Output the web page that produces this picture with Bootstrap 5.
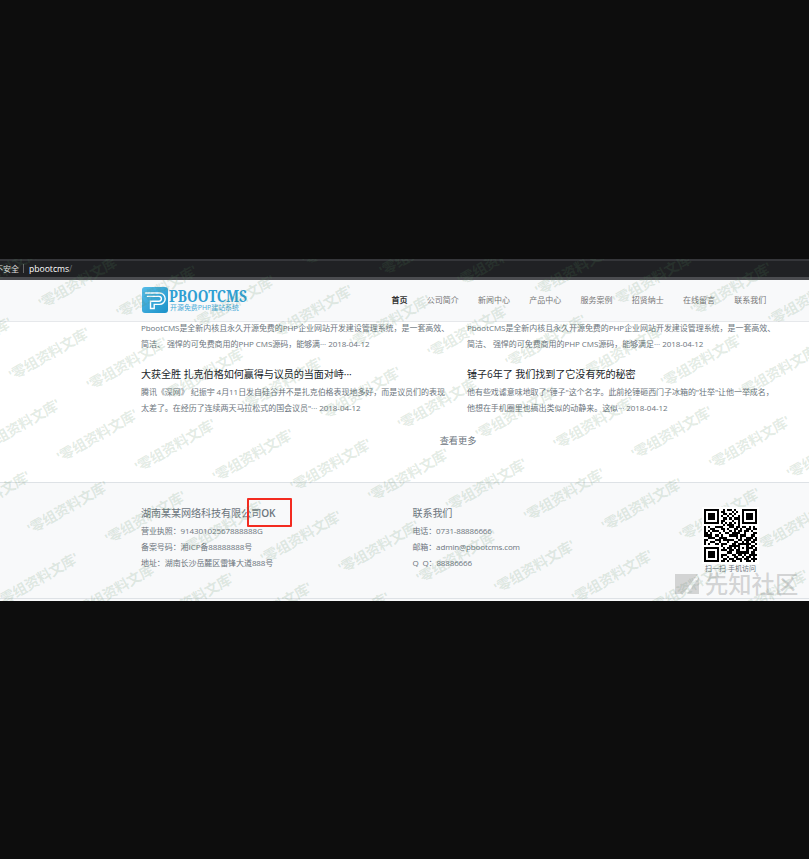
<!DOCTYPE html>
<html>
<head>
<meta charset="utf-8">
<meta name="viewport" content="width=device-width, initial-scale=1">
<title>PbootCMS</title>
<link rel="stylesheet" href="https://cdn.jsdelivr.net/npm/bootstrap@5.3.0/dist/css/bootstrap.min.css">
<style>
body{background:#0d0d0d;font-family:"Open Sans","Noto Sans CJK SC",sans-serif;font-size:8px;line-height:16px;color:#6c757d;overflow:hidden;height:859px}
.shot{margin-top:259px;height:342px;background:#fff;overflow:hidden}
.addr{height:21px;background:#202124;border-top:2px solid #35363a;border-bottom:3px solid #4b4c50;color:#fff;line-height:14px;font-size:8.6px;padding-bottom:1px}
.addr .unsafe{margin-left:-5px;width:24px;color:#e0e0e0;font-size:8px}
.addr .sep{width:1px;height:9px;background:#666;margin-right:5px}
.site-head{height:42px;background:#f8f9fa;border-bottom:1px solid #e6e8eb}
.brand{margin-left:142px;width:249.5px;padding-bottom:1px}
.brand-name{font:700 14.3px/14px "Noto Serif","DejaVu Serif Condensed","Liberation Serif",serif;color:#2f9fd3}
.menu{gap:19.25px;color:#777;padding-bottom:1px}
.menu b{font-weight:700;color:#333}
.news{padding-left:141px;height:161px}
.news-col{width:326px;flex:none;white-space:nowrap;margin-top:-2px;letter-spacing:-.05px}
.news h2{font-size:10.1px;line-height:17px;margin:14px 0 1px;color:#212529;font-weight:400;letter-spacing:-.08px}
.more{font-size:9.2px;line-height:16px;width:634px;margin-top:17px}
.site-foot{height:117px;background:#f8f9fa;border-top:1px solid #dee2e6;border-bottom:1px solid #dee2e6;padding:22px 0 0 141px;margin-top:-1px}
.foot-title{font-size:10.1px;line-height:17px;margin-bottom:1px}
.foot-a{width:271.5px;white-space:nowrap;letter-spacing:-.08px}.foot-b{width:289px;white-space:nowrap;letter-spacing:-.14px}
.qr-box{width:58px;font-size:7px;line-height:9px;color:#6c757d;padding-top:2px}
.qr-box svg{z-index:2}
.tail{height:2px;background:#f8f9fa}
.red-mark{left:247px;top:498px;width:45px;height:29px;border:2px solid #f32b20;border-radius:1px}
.overlay{left:0;top:259px;pointer-events:none}
</style>
<script src="https://cdn.jsdelivr.net/npm/bootstrap@5.3.0/dist/js/bootstrap.bundle.min.js"></script>
</head>
<body>
<div class="shot">
  <div class="addr d-flex align-items-center text-nowrap"><span class="unsafe">不安全</span><span class="sep ms-1"></span><span>pbootcms<span class="text-secondary">/</span></span></div>
  <header class="site-head d-flex align-items-center">
    <div class="brand d-flex align-items-center flex-shrink-0">
      <svg width="26" height="26" viewBox="0 0 26 26"><defs><linearGradient id="lg" x2="1" y2="1"><stop stop-color="#56bce8"/><stop offset="1" stop-color="#1b92c9"/></linearGradient></defs><rect width="26" height="26" rx="3" fill="url(#lg)"/><g fill="none" stroke="#fff" stroke-width="1.400" stroke-linecap="round"><path d="M3.500 6H17.500a5.700 5.700 0 0 1 0 11.400H12.200V21.500H8.500V14.200H17a2.400 2.400 0 0 0 0-4.800H5.500"/></g></svg>
      <div class="text-nowrap ms-1"><div class="brand-name"><svg width="79" height="14" class="d-block overflow-visible"><text x="-3" y="12.500" textLength="78" lengthAdjust="spacingAndGlyphs" fill="#2f9fd3" font-size="15.500">PBOOTCMS</text></svg></div><svg width="72" height="8" class="d-block overflow-visible"><text x="-2" y="7" textLength="69" lengthAdjust="spacingAndGlyphs" fill="#45a9d8" font-size="6.500">开源免费PHP建站系统</text></svg></div>
    </div>
    <nav class="menu d-flex text-nowrap"><b>首页</b><span>公司简介</span><span>新闻中心</span><span>产品中心</span><span>服务案例</span><span>招贤纳士</span><span>在线留言</span><span>联系我们</span></nav>
  </header>
  <main class="news d-flex flex-column">
    <div class="d-flex">
      <article class="news-col"><div>PbootCMS是全新内核且永久开源免费的PHP企业网站开发建设管理系统，是一套高效、</div><div>简洁、 强悍的可免费商用的PHP CMS源码，能够满··· 2018-04-12</div><h2>大获全胜 扎克伯格如何赢得与议员的当面对峙···</h2><div>腾讯《深网》 纪振宇 4月11日发自硅谷并不是扎克伯格表现地多好，而是议员们的表现</div><div>太差了。在经历了连续两天马拉松式的国会议员"··· 2018-04-12</div></article>
      <article class="news-col"><div>PbootCMS是全新内核且永久开源免费的PHP企业网站开发建设管理系统，是一套高效、</div><div>简洁、 强悍的可免费商用的PHP CMS源码，能够满足··· 2018-04-12</div><h2>锤子6年了 我们找到了它没有死的秘密</h2><div>他有些戏谑意味地取了"锤子"这个名字。此前抡锤砸西门子冰箱的"壮举"让他一举成名，</div><div>他想在手机圈里也搞出类似的动静来。这似··· 2018-04-12</div></article>
    </div>
    <div class="more text-center">查看更多</div>
  </main>
  <footer class="site-foot d-flex">
    <div class="foot-a"><div class="foot-title">湖南某某网络科技有限公司<span class="fw-semibold">OK</span></div><div>营业执照：91430102567888888G</div><div>备案号码：湘ICP备88888888号</div><div>地址：湖南长沙岳麓区雷锋大道888号</div></div>
    <div class="foot-b"><div class="foot-title">联系我们</div><div>电话：0731-88886666</div><div>邮箱：admin@pbootcms.com</div><div>Q&nbsp; Q：88886666</div></div>
    <div class="qr-box text-center text-nowrap"><svg id="qr" class="d-block mx-auto position-relative" width="57" height="57" viewBox="-0.900 -0.900 26.800 26.800" shape-rendering="crispEdges"><rect x="-1" y="-1" width="27" height="27" fill="#fff"/></svg>扫一扫 手机访问</div>
  </footer>
  <div class="tail"></div>
</div>
<div class="red-mark position-absolute"></div>
<svg class="overlay position-absolute" width="809" height="342" viewBox="0 259 809 342">
  <g id="marks" fill="#53865a" fill-opacity=".17" font-size="14.300" font-weight="700"></g>
  <g fill="#777" fill-opacity=".29"><path d="M675 574H698L683 594H675Z"/><path d="M699 577V594H687Z"/><text x="705" y="592.500" font-size="23.300" font-weight="500">先知社区</text></g>
</svg>
<script>
const rows=[
"1111111001011010001111111","1000001011000101001000001","1011101001101010001011101","1011101010010100101011101",
"1011101001101011101011101","1000001011000100101000001","1111111010101010101111111","0000000001011100100000000",
"1010011110001101101101010","1001100011010011010011011","1010111001001010110110100","1101000100110111100100011",
"1111011010001111011100110","0011100111100001010011101","1100011101111100110111011","1001100100010011001010110",
"1010011011100110111111001","0000000010001111100010110","1111111001011010101011101","1000001011101101100010011",
"1011101000011001111110110","1011101011100110110101111","1011101010010011001011010","1000001001101101110110111","1111111011010110010011010"];
let d="";
rows.forEach((r,y)=>[...r].forEach((v,x)=>{if(v==="1")d+=`M${x} ${y}h1v1h-1z`;}));
const ns="http://www.w3.org/2000/svg",p=document.createElementNS(ns,"path");
p.setAttribute("d",d);document.getElementById("qr").append(p);
for(let j=-3;j<5;j++)for(let i=-2;i<16;i++){
  const x=11+77.8*i-29.7*j,y=320.7+9.85*i+71.9*j;
  if(x<-2||x>890||y<212||y>648)continue;
  const t=document.createElementNS(ns,"text");
  t.setAttribute("transform",`translate(${x+2.5} ${y+5}) rotate(-30)`);
  t.setAttribute("text-anchor","end");t.setAttribute("textLength","91");
  t.textContent="'零组资料文库'";document.getElementById("marks").append(t);
}
</script>
</body>
</html>
